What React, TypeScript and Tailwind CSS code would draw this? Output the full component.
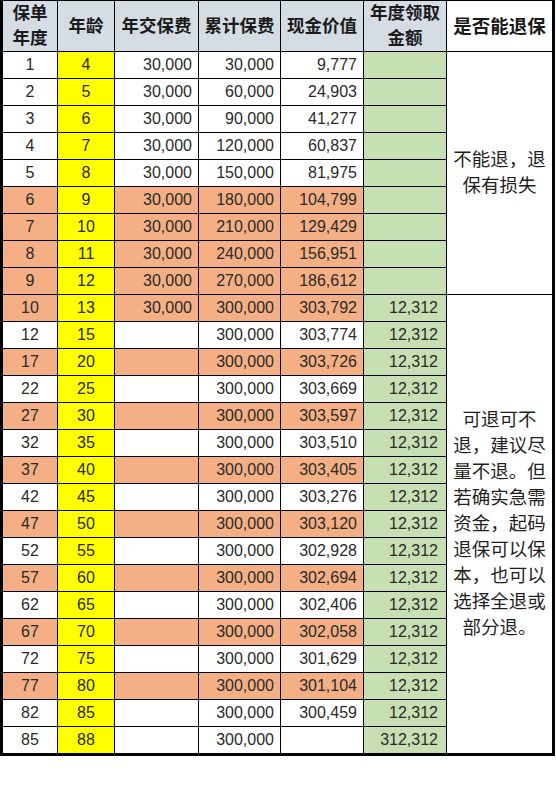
import React from 'react'

type Row = {
  year: string
  age: string
  pay: string
  total: string
  cash: string
  get: string
  orange?: boolean
}

const rows: Row[] = [
  { year: '1', age: '4', pay: '30,000', total: '30,000', cash: '9,777', get: '' },
  { year: '2', age: '5', pay: '30,000', total: '60,000', cash: '24,903', get: '' },
  { year: '3', age: '6', pay: '30,000', total: '90,000', cash: '41,277', get: '' },
  { year: '4', age: '7', pay: '30,000', total: '120,000', cash: '60,837', get: '' },
  { year: '5', age: '8', pay: '30,000', total: '150,000', cash: '81,975', get: '' },
  { year: '6', age: '9', pay: '30,000', total: '180,000', cash: '104,799', get: '', orange: true },
  { year: '7', age: '10', pay: '30,000', total: '210,000', cash: '129,429', get: '', orange: true },
  { year: '8', age: '11', pay: '30,000', total: '240,000', cash: '156,951', get: '', orange: true },
  { year: '9', age: '12', pay: '30,000', total: '270,000', cash: '186,612', get: '', orange: true },
  { year: '10', age: '13', pay: '30,000', total: '300,000', cash: '303,792', get: '12,312', orange: true },
  { year: '12', age: '15', pay: '', total: '300,000', cash: '303,774', get: '12,312' },
  { year: '17', age: '20', pay: '', total: '300,000', cash: '303,726', get: '12,312', orange: true },
  { year: '22', age: '25', pay: '', total: '300,000', cash: '303,669', get: '12,312' },
  { year: '27', age: '30', pay: '', total: '300,000', cash: '303,597', get: '12,312', orange: true },
  { year: '32', age: '35', pay: '', total: '300,000', cash: '303,510', get: '12,312' },
  { year: '37', age: '40', pay: '', total: '300,000', cash: '303,405', get: '12,312', orange: true },
  { year: '42', age: '45', pay: '', total: '300,000', cash: '303,276', get: '12,312' },
  { year: '47', age: '50', pay: '', total: '300,000', cash: '303,120', get: '12,312', orange: true },
  { year: '52', age: '55', pay: '', total: '300,000', cash: '302,928', get: '12,312' },
  { year: '57', age: '60', pay: '', total: '300,000', cash: '302,694', get: '12,312', orange: true },
  { year: '62', age: '65', pay: '', total: '300,000', cash: '302,406', get: '12,312' },
  { year: '67', age: '70', pay: '', total: '300,000', cash: '302,058', get: '12,312', orange: true },
  { year: '72', age: '75', pay: '', total: '300,000', cash: '301,629', get: '12,312' },
  { year: '77', age: '80', pay: '', total: '300,000', cash: '301,104', get: '12,312', orange: true },
  { year: '82', age: '85', pay: '', total: '300,000', cash: '300,459', get: '12,312' },
  { year: '85', age: '88', pay: '', total: '300,000', cash: '', get: '312,312' },
]

const head = "bg-[#d6dce4] flex items-center justify-center text-center font-bold text-[17.5px] leading-[25px] text-[#1a1a1a]"

export default function App() {
  return (
    <div className="w-[556px] h-[810px] bg-white font-['Liberation_Sans','Noto_Sans_CJK_SC',sans-serif]">
      <div className="w-[555px] grid grid-cols-[54px_56px_83px_81px_82px_82px_105px] grid-rows-[50px_repeat(26,26px)] gap-px bg-black border-t border-l-[3px] border-r-[3px] border-b-[3px] border-black text-[16px] text-[#2a2a2a]">
        <div className={head}>保单<br />年度</div>
        <div className={head}>年龄</div>
        <div className={head}>年交保费</div>
        <div className={head}>累计保费</div>
        <div className={head}>现金价值</div>
        <div className={head}>年度领取<br />金额</div>
        <div className={head + " bg-white! text-[18.5px]"}>是否能退保</div>

        {rows.map((r, i) => {
          const bg = r.orange ? 'bg-[#f4b084]' : 'bg-white'
          return (
            <React.Fragment key={r.year}>
              <div className={`${bg} flex items-center justify-center`}>{r.year}</div>
              <div className="bg-[#ffff00] flex items-center justify-center">{r.age}</div>
              <div className={`${bg} flex items-center justify-end pr-[6px]`}>{r.pay}</div>
              <div className={`${bg} flex items-center justify-end pr-[6px]`}>{r.total}</div>
              <div className={`${bg} flex items-center justify-end pr-[6px]`}>{r.cash}</div>
              <div className="bg-[#c6e0b4] flex items-center justify-end pr-[8px]">{r.get}</div>
              {i === 0 && (
                <div className="row-span-9 bg-white flex items-center justify-center text-center text-[18.5px] leading-[26px] text-[#1f1f1f]">
                  不能退，退<br />保有损失
                </div>
              )}
              {i === 9 && (
                <div className="row-span-17 bg-white flex items-center justify-center text-center text-[18.5px] leading-[26px] text-[#1f1f1f]">
                  可退可不<br />退，建议尽<br />量不退。但<br />若确实急需<br />资金，起码<br />退保可以保<br />本，也可以<br />选择全退或<br />部分退。
                </div>
              )}
            </React.Fragment>
          )
        })}
      </div>
    </div>
  )
}
